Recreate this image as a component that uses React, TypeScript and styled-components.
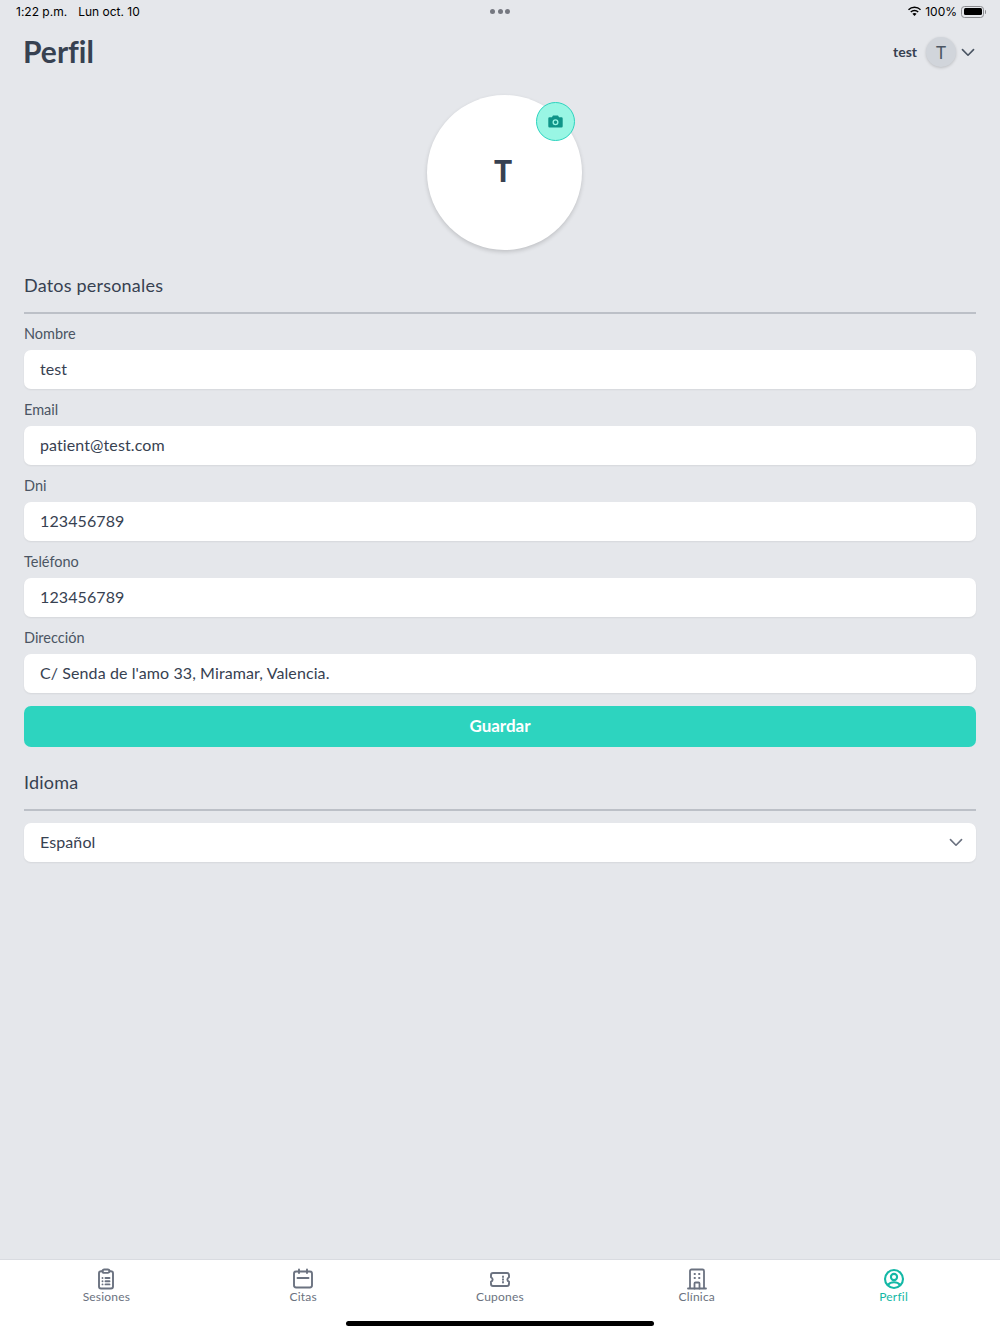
import React from 'react';
import styled, { createGlobalStyle } from 'styled-components';

const tabs = [
	{ label: 'Sesiones', icon: 'clipboard' },
	{ label: 'Citas', icon: 'calendar' },
	{ label: 'Cupones', icon: 'ticket' },
	{ label: 'Clínica', icon: 'building' },
	{ label: 'Perfil', icon: 'user', active: true }
];

const fields = [
	{ label: 'Nombre', value: 'test' },
	{ label: 'Email', value: 'patient@test.com' },
	{ label: 'Dni', value: '123456789' },
	{ label: 'Teléfono', value: '123456789' },
	{ label: 'Dirección', value: "C/ Senda de l'amo 33, Miramar, Valencia." }
];

const TabIcon = ({ name }: { name: string }) => {
	if (name === 'clipboard') {
		return (
			<svg viewBox="0 0 22 22" fill="none" stroke="currentColor" strokeWidth="1.9" strokeLinecap="round" strokeLinejoin="round">
				<path d="M7.500 3.300H6a2 2 0 0 0-2 2V18.500a2 2 0 0 0 2 2h10a2 2 0 0 0 2-2V5.300a2 2 0 0 0-2-2h-1.500" />
				<rect x="7.500" y="1.500" width="7" height="3.400" rx="1.700" />
				<path d="M7.500 10h.01M10.500 10h4M7.500 13.200h.01M10.500 13.200h4M7.500 16.400h.01M10.500 16.400h4" />
			</svg>
		);
	}
	if (name === 'calendar') {
		return (
			<svg viewBox="0 0 22 22" fill="none" stroke="currentColor" strokeWidth="1.9" strokeLinecap="round" strokeLinejoin="round">
				<rect x="2" y="3.500" width="18" height="16" rx="2.200" />
				<path d="M7 1.500v3.500M15 1.500v3.500M5.500 10h11" />
			</svg>
		);
	}
	if (name === 'ticket') {
		return (
			<svg viewBox="0 0 22 22" fill="none" stroke="currentColor" strokeWidth="1.9" strokeLinecap="round" strokeLinejoin="round">
				<path d="M4 5h14a2 2 0 0 1 2 2v2.300a2.300 2.300 0 0 0 0 4.400V16a2 2 0 0 1-2 2H4a2 2 0 0 1-2-2v-2.300a2.300 2.300 0 0 0 0-4.400V7a2 2 0 0 1 2-2Z" />
				<path d="M14 8.500v.6M14 11.200v.6M14 13.900v.6" />
			</svg>
		);
	}
	if (name === 'building') {
		return (
			<svg viewBox="0 0 22 22" fill="none" stroke="currentColor" strokeWidth="1.800" strokeLinecap="round" strokeLinejoin="round">
				<path d="M4 20.500V3a1.500 1.500 0 0 1 1.500-1.500h11A1.500 1.500 0 0 1 18 3v17.500M2 20.500h18" />
				<path d="M8.500 20.500v-5a1 1 0 0 1 1-1h3a1 1 0 0 1 1 1v5M8.500 6h.5M13 6h.5M8.500 10h.5M13 10h.5" />
			</svg>
		);
	}
	return (
		<svg viewBox="0 0 22 22" fill="none" stroke="currentColor" strokeWidth="2.100" strokeLinecap="round" strokeLinejoin="round">
			<circle cx="11" cy="11" r="9" />
			<circle cx="11" cy="9" r="3.100" />
			<path d="M4.800 17c1.600-1.900 3.700-2.700 6.200-2.700s4.600.8 6.200 2.700" />
		</svg>
	);
};

const Chevron = () => (
	<svg width="14" height="14" viewBox="0 0 24 24" fill="none" stroke="currentColor" strokeWidth="2.800" strokeLinecap="round" strokeLinejoin="round">
		<path d="M2.500 8l9.500 9.500L21.500 8" />
	</svg>
);

export default function App() {
	return (
		<Page>
			<GlobalStyle />
			<StatusBar>
				<StatusLeft>
					<span>1:22 p.m.</span>
					<span>Lun oct. 10</span>
				</StatusLeft>
				<Dots>
					<Dot />
					<Dot />
					<Dot />
				</Dots>
				<StatusRight>
					<WifiIcon width="15" height="11" viewBox="0 0 16 12" fill="#000">
						<path d="M8 2.300c2.300 0 4.400.9 6 2.400l1.100-1.200A10.300 10.300 0 0 0 8 .6 10.300 10.300 0 0 0 .9 3.500L2 4.700a8.700 8.700 0 0 1 6-2.400Z" />
						<path d="M8 5.800c1.300 0 2.500.5 3.500 1.400l1.100-1.200A6.700 6.700 0 0 0 8 4.100 6.700 6.700 0 0 0 3.400 6l1.100 1.200c1-.9 2.200-1.400 3.500-1.400Z" />
						<path d="M8 7.600c-.9 0-1.700.3-2.300.9L8 11l2.300-2.500c-.6-.6-1.400-.9-2.300-.9Z" />
					</WifiIcon>
					<span>100%</span>
					<Battery>
						<BatteryFill />
					</Battery>
				</StatusRight>
			</StatusBar>

			<Header>
				<Title>Perfil</Title>
				<UserMenu>
					<UserName>test</UserName>
					<SmallAvatar>T</SmallAvatar>
					<MenuChevron>
						<Chevron />
					</MenuChevron>
				</UserMenu>
			</Header>

			<Content>
				<AvatarWrap>
					<Avatar>T</Avatar>
					<CameraBadge>
						<svg width="15" height="13" viewBox="0 0 15 13">
							<path fill="#0f9488" fillRule="evenodd" d="M5 .5h5l1.100 1.700h2.400a1.200 1.200 0 0 1 1.200 1.200v7.900a1.200 1.200 0 0 1-1.200 1.200h-12a1.200 1.200 0 0 1-1.200-1.200V3.400a1.200 1.200 0 0 1 1.200-1.200h2.400L5 .5Zm2.500 3.700a3 3 0 1 0 0 6 3 3 0 0 0 0-6Zm0 1.300a1.700 1.700 0 1 1 0 3.400 1.700 1.700 0 0 1 0-3.400Z" />
						</svg>
					</CameraBadge>
				</AvatarWrap>

				<SectionTitle>Datos personales</SectionTitle>
				<Divider />
				<Fields>
					{fields.map((field) => (
						<Field key={field.label}>
							<Label>{field.label}</Label>
							<InputBox>{field.value}</InputBox>
						</Field>
					))}
				</Fields>
				<SaveButton>Guardar</SaveButton>

				<SectionTitle>Idioma</SectionTitle>
				<Divider />
				<SelectBox>
					<span>Español</span>
					<SelectChevron>
						<Chevron />
					</SelectChevron>
				</SelectBox>
			</Content>

			<TabBar>
				{tabs.map((tab) => (
					<TabItem key={tab.label} $active={!!tab.active}>
						<TabIcon name={tab.icon} />
						<TabLabel>{tab.label}</TabLabel>
					</TabItem>
				))}
			</TabBar>
			<HomeIndicator />
		</Page>
	);
}

const GlobalStyle = createGlobalStyle`
	html, body {
		margin: 0;
		padding: 0;
	}
	body {
		background: #e5e7eb;
		font-family: 'Lato', 'Liberation Sans', sans-serif;
		font-variant-ligatures: none;
	}
	* {
		box-sizing: border-box;
	}
`;

const Page = styled.div`
	position: relative;
	width: 1000px;
	height: 1334px;
	display: flex;
	flex-direction: column;
	background: #e5e7eb;
	overflow: hidden;
`;

const StatusBar = styled.div`
	height: 24px;
	padding: 0 16px 1px;
	display: grid;
	grid-template-columns: 1fr auto 1fr;
	align-items: center;
	font-family: 'Inter', 'Liberation Sans', sans-serif;
	font-size: 12px;
	color: #000;
`;

const StatusLeft = styled.div`
	display: flex;
	gap: 11px;
	white-space: nowrap;
`;

const Dots = styled.div`
	display: flex;
	gap: 2.500px;
`;

const Dot = styled.span`
	width: 5px;
	height: 5px;
	border-radius: 50%;
	background: #757880;
`;

const StatusRight = styled.div`
	display: flex;
	justify-content: flex-end;
	align-items: center;
	gap: 4px;
`;

const WifiIcon = styled.svg`
	margin-right: -1px;
`;

const Battery = styled.div`
	position: relative;
	width: 23px;
	height: 12px;
	padding: 1.500px;
	border: 1px solid #8b8c90;
	border-radius: 3.500px;

	&::after {
		content: '';
		position: absolute;
		right: -3px;
		top: 3px;
		width: 1.500px;
		height: 4px;
		border-radius: 0 1px 1px 0;
		background: #8b8c90;
	}
`;

const BatteryFill = styled.div`
	width: 100%;
	height: 100%;
	border-radius: 1.500px;
	background: #000;
`;

const Header = styled.header`
	height: 56px;
	display: flex;
	align-items: center;
	justify-content: space-between;
	padding: 0 25px 0 23px;
`;

const Title = styled.h1`
	margin: 0;
	padding-bottom: 2px;
	font-size: 30px;
	font-weight: 700;
	color: #374151;
`;

const UserMenu = styled.div`
	display: flex;
	align-items: center;
`;

const UserName = styled.span`
	padding-bottom: 2px;
	margin-right: 9px;
	font-size: 14px;
	font-weight: 700;
	color: #374151;
`;

const SmallAvatar = styled.div`
	width: 30px;
	height: 30px;
	margin-right: 5px;
	border-radius: 50%;
	display: flex;
	align-items: center;
	justify-content: center;
	background: #d1d5db;
	color: #4b5563;
	font-size: 17px;
	box-shadow: 0 1px 3px rgba(0, 0, 0, 0.18);
`;

const MenuChevron = styled.span`
	display: flex;
	color: #4b5563;
`;

const Content = styled.main`
	flex: 1;
	display: flex;
	flex-direction: column;
	padding: 15px 24px 0;
`;

const AvatarWrap = styled.div`
	position: relative;
	align-self: center;
	width: 155px;
	height: 155px;
	margin-left: 8px;
`;

const Avatar = styled.div`
	width: 100%;
	height: 100%;
	padding: 0 2px 5px 0;
	border-radius: 50%;
	background: #fff;
	display: flex;
	align-items: center;
	justify-content: center;
	font-size: 30px;
	font-weight: 900;
	color: #374151;
	box-shadow: 0 2px 4px rgba(0, 0, 0, 0.16);
`;

const CameraBadge = styled.div`
	position: absolute;
	top: 7px;
	right: 7px;
	width: 39px;
	height: 39px;
	border-radius: 50%;
	display: flex;
	align-items: center;
	justify-content: center;
	background: #99f6e4;
	border: 1px solid #2dd4bf;
`;

const SectionTitle = styled.h2`
	margin: 24px 0 0;
	height: 24px;
	line-height: 23px;
	font-size: 18px;
	font-weight: 400;
	letter-spacing: 0.2px;
	color: #374151;
`;

const Divider = styled.div`
	height: 2px;
	margin-top: 14px;
	background: #bcc0c7;
`;

const Fields = styled.div`
	display: flex;
	flex-direction: column;
	gap: 11px;
	margin-top: 10px;
`;

const Field = styled.div`
	display: flex;
	flex-direction: column;
	gap: 7px;
`;

const Label = styled.label`
	height: 19px;
	line-height: 19px;
	font-size: 14.500px;
	color: #4b5563;
`;

const InputBox = styled.div`
	height: 39px;
	display: flex;
	align-items: center;
	padding: 0 13px 2px 16px;
	background: #fff;
	border-radius: 7px;
	font-size: 16px;
	letter-spacing: 0.1px;
	color: #374151;
	box-shadow: 0 1px 2px rgba(0, 0, 0, 0.07);
`;

const SaveButton = styled.button`
	height: 41px;
	margin-top: 13px;
	padding: 0 0 2px;
	border: none;
	border-radius: 7px;
	background: #2dd4bf;
	color: #fff;
	font-family: inherit;
	font-size: 17px;
	font-weight: 700;
`;

const SelectBox = styled(InputBox)`
	justify-content: space-between;
	margin-top: 12px;
`;

const SelectChevron = styled.span`
	display: flex;
	color: #6b7280;
`;

const TabBar = styled.nav`
	height: 75px;
	flex-shrink: 0;
	display: grid;
	grid-template-columns: repeat(5, 1fr);
	padding: 8px 8px 0;
	background: #fff;
	border-top: 1px solid #d9dbe0;
`;

const TabItem = styled.div<{ $active: boolean }>`
	display: flex;
	flex-direction: column;
	align-items: center;
	color: ${(props) => (props.$active ? '#14b8a6' : '#6b7280')};

	svg {
		width: 22px;
		height: 22px;
	}
`;

const TabLabel = styled.span`
	margin-top: -1px;
	font-size: 12px;
	line-height: 16px;
	letter-spacing: 0.2px;
`;

const HomeIndicator = styled.div`
	position: absolute;
	left: 346px;
	bottom: 8px;
	width: 308px;
	height: 5px;
	border-radius: 3px;
	background: #000;
`;
